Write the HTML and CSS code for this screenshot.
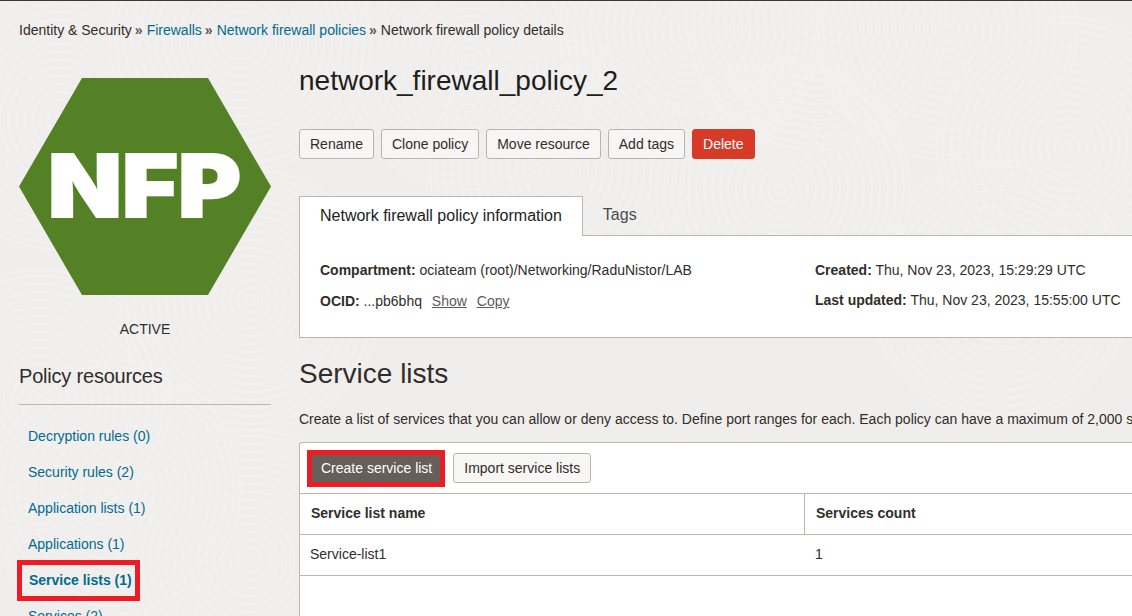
FILE: index.html
```html
<!DOCTYPE html>
<html lang="en">
<head>
<meta charset="utf-8">
<title>Network firewall policy details</title>
<link rel="stylesheet" href="styles.css">
</head>
<body>
<svg class="backdrop" width="1132" height="616" viewBox="0 0 1132 616" aria-hidden="true">
  <defs>
    <g id="swirl">
      <circle r="130" class="disc"/>
      <circle r="124"/><circle r="116"/><circle r="108"/><circle r="100"/><circle r="92"/><circle r="84"/><circle r="76"/><circle r="68"/><circle r="60"/><circle r="52"/><circle r="44"/><circle r="36"/><circle r="28"/><circle r="20"/><circle r="12"/><circle r="5"/>
    </g>
  </defs>
  <g class="rings">
    <use href="#swirl" x="60" y="120"/>
    <use href="#swirl" x="240" y="40"/>
    <use href="#swirl" x="470" y="60"/>
    <use href="#swirl" x="690" y="30"/>
    <use href="#swirl" x="1067" y="147"/>
    <use href="#swirl" x="817" y="20"/>
    <use href="#swirl" x="947" y="30"/>
    <use href="#swirl" x="780" y="190"/>
    <use href="#swirl" x="560" y="170"/>
    <use href="#swirl" x="1000" y="290"/>
    <use href="#swirl" x="40" y="400"/>
    <use href="#swirl" x="250" y="300"/>
    <use href="#swirl" x="110" y="490"/>
    <use href="#swirl" x="250" y="560"/>
  </g>
</svg>
<nav class="crumbs">
  <span class="crumb">Identity &amp; Security</span><span class="sep">»</span>
  <a class="crumb link">Firewalls</a><span class="sep">»</span>
  <a class="crumb link">Network firewall policies</a><span class="sep">»</span>
  <span class="crumb">Network firewall policy details</span>
</nav>
<div class="layout">
  <aside class="side">
    <svg class="hex" width="252" height="217" viewBox="0 0 252 217">
      <polygon points="63,0 189,0 252,108.5 189,217 63,217 0,108.5" fill="#548125"/>
      <text x="29" y="139" textLength="193" lengthAdjust="spacingAndGlyphs" class="hex-text">NFP</text>
    </svg>
    <div class="status">ACTIVE</div>
    <h2 class="side-title">Policy resources</h2>
    <ul class="side-nav">
      <li><a>Decryption rules (0)</a></li>
      <li><a>Security rules (2)</a></li>
      <li><a>Application lists (1)</a></li>
      <li><a>Applications (1)</a></li>
      <li class="current"><a>Service lists (1)</a></li>
      <li><a>Services (2)</a></li>
    </ul>
  </aside>
  <main class="main">
    <h1 class="title">network_firewall_policy_2</h1>
    <div class="actions">
      <button class="btn">Rename</button>
      <button class="btn">Clone policy</button>
      <button class="btn">Move resource</button>
      <button class="btn">Add tags</button>
      <button class="btn danger">Delete</button>
    </div>
    <div class="tabs">
      <div class="tab active">Network firewall policy information</div>
      <div class="tab">Tags</div>
    </div>
    <section class="info">
      <div class="info-col first">
        <p><b>Compartment:</b> ociateam (root)/Networking/RaduNistor/LAB</p>
        <p><b>OCID:</b> ...pb6bhq <a class="inline-link">Show</a> <a class="inline-link">Copy</a></p>
      </div>
      <div class="info-col">
        <p><b>Created:</b> Thu, Nov 23, 2023, 15:29:29 UTC</p>
        <p><b>Last updated:</b> Thu, Nov 23, 2023, 15:55:00 UTC</p>
      </div>
    </section>
    <h2 class="section-title">Service lists</h2>
    <p class="desc">Create a list of services that you can allow or deny access to. Define port ranges for each. Each policy can have a maximum of 2,000 services and 500 lists.</p>
    <section class="panel">
      <div class="toolbar">
        <span class="callout"><button class="btn primary">Create service list</button></span>
        <button class="btn">Import service lists</button>
      </div>
      <div class="row head">
        <div class="cell name">Service list name</div>
        <div class="cell">Services count</div>
      </div>
      <div class="row">
        <div class="cell name plain">Service-list1</div>
        <div class="cell plain">1</div>
      </div>
    </section>
  </main>
</div>
</body>
</html>
```
FILE: styles.css
```css
* { box-sizing: border-box; }
html, body { height: 100%; }
body {
  margin: 0;
  width: 1132px;
  height: 616px;
  overflow: hidden;
  border-top: 1px solid #3a3836;
  font-family: "Liberation Sans", Arial, sans-serif;
  font-size: 14px;
  color: #312d2a;
  background-color: #f0eeec;
}
.backdrop { position: absolute; left: 0; top: 0; z-index: -1; }
.rings { fill: none; stroke: #f2f1ef; stroke-width: 2px; }
.rings .disc { fill: #f0eeec; stroke: #edebe9; stroke-width: 1px; }
a { color: #006b8f; }
.crumbs { display: flex; align-items: center; height: 16px; margin: 21px 0 0 19px; white-space: nowrap; }
.sep { margin: 0 4px 0 3px; color: #5f5b57; font-size: 14px; font-weight: bold; }
.crumb.link { color: #006b8f; }
.layout { display: flex; align-items: flex-start; padding-left: 19px; margin-top: 40px; }
.side { flex: 0 0 252px; width: 252px; }
.hex { display: block; }
.hex-text { font-family: Inter, "Liberation Sans", sans-serif; font-weight: 900; font-size: 86px; fill: #fff; stroke: #fff; stroke-width: 2px; }
.status { margin-top: 26px; text-align: center; line-height: 16px; }
.side-title { margin: 27px 0 0; font-size: 20px; line-height: 24px; font-weight: 400; letter-spacing: -0.2px; padding-bottom: 16px; border-bottom: 1px solid #bcb6b1; }
.side-nav { list-style: none; margin: 13px 0 0; padding: 0; }
.side-nav li { height: 36px; padding: 10px 0 0 9px; line-height: 16px; }
.side-nav a { color: #006b8f; }
.side-nav .current { position: relative; font-weight: 700; padding-left: 10px; }
.side-nav .current::after { content: ""; position: absolute; left: -2px; top: -2px; width: 123px; height: 41px; box-sizing: border-box; border: 5px solid #ed1c24; }
.main { margin-left: 28px; width: 900px; flex: none; }
.title { margin: -19px 0 0; font-size: 28px; line-height: 44px; font-weight: 400; color: #201e1c; white-space: nowrap; }
.actions { display: flex; gap: 7px; margin-top: 26px; }
.btn { font: inherit; height: 30px; padding: 0 10px; border: 1px solid #b9b4af; border-radius: 3px; background: #f7f6f5; color: #312d2a; white-space: nowrap; }
.btn.danger { background: #d73b27; border-color: #d73b27; color: #fff; }
.btn.primary { background: #655e59; border-color: #655e59; color: #fff; border-radius: 0; height: 27px; padding: 0 7px 0 8px; }
.tabs { display: flex; margin-top: 37px; position: relative; z-index: 1; }
.tab { height: 40px; padding: 0 20px; font-size: 16px; line-height: 37px; color: #4f4a46; }
.tab.active { background: #fff; border: 1px solid #bcb6b1; border-bottom: 0; color: #201e1c; }
.info { display: flex; margin-top: -1px; width: 900px; height: 103px; padding: 26px 0 0 20px; background: #fff; border: 1px solid #bcb6b1; border-right: 0; }
.info-col { flex: 0 0 495px; }
.info-col p { margin: 0 0 14px; line-height: 16px; }
.info-col.first p { margin-bottom: 15px; }
.inline-link { color: #5f5b57; text-decoration: underline; margin-left: 6px; }
.section-title { margin: 16px 0 0; font-size: 28px; line-height: 40px; font-weight: 400; color: #312d2a; }
.desc { margin: 17px 0 0; line-height: 16px; white-space: nowrap; }
.panel { margin-top: 15px; width: 900px; height: 180px; background: #fff; border: 1px solid #bcb6b1; border-right: 0; border-radius: 3px 0 0 3px; }
.toolbar { display: flex; align-items: center; gap: 8px; height: 51px; padding-left: 7px; border-bottom: 1px solid #bcb6b1; }
.callout { display: flex; border: 5px solid #ed1c24; }
.row { display: flex; height: 41px; border-bottom: 1px solid #bcb6b1; align-items: stretch; }
.cell { display: flex; align-items: center; padding: 0 0 2px 11px; font-weight: 700; }
.cell.name { width: 505px; border-right: 1px solid #bcb6b1; }
.cell.plain { font-weight: 400; padding-left: 10px; }
.cell.name.plain { border-right: 0; }
```
